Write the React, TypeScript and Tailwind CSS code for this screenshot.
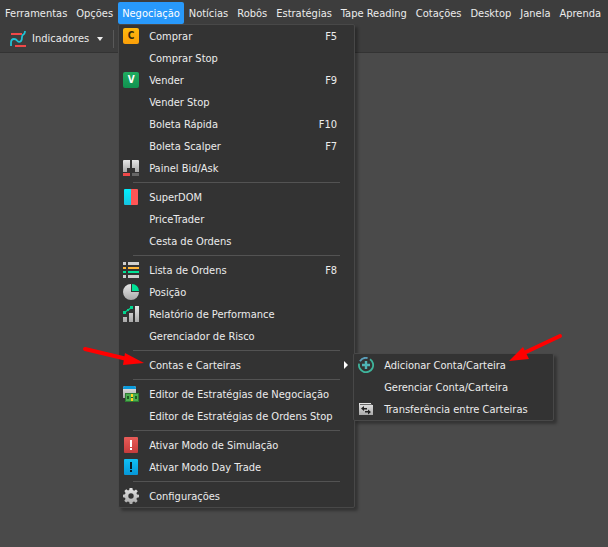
import type { ReactNode } from 'react';

type Item = {
  label: string;
  icon?: ReactNode;
  shortcut?: string;
  children?: Item[];
};

const Svg = ({ children }: { children: ReactNode }) => (
  <svg viewBox="0 0 16 16" className="size-4" aria-hidden="true">
    <defs>
      <linearGradient id="silver" x1="0" y1="0" x2="0" y2="1">
        <stop offset="0" stopColor="#e6e6e6" />
        <stop offset="1" stopColor="#a9a9a9" />
      </linearGradient>
      <linearGradient id="cyan" x1="0" y1="0" x2="0" y2="1">
        <stop offset="0" stopColor="#00f0ff" />
        <stop offset="1" stopColor="#17c3e0" />
      </linearGradient>
    </defs>
    {children}
  </svg>
);

const LetterIcon = ({ letter, className }: { letter: string; className: string }) => (
  <span className={`flex size-4 items-center justify-center rounded-xs bg-linear-to-b text-[10px] leading-4 font-bold ${className}`}>
    {letter}
  </span>
);

const BidAskIcon = () => (
  <Svg>
    <path d="M0 1Q0 0 1 0H7V8H4V12H0ZM9 0H15Q16 0 16 1V12H12V8H9Z" fill="url(#silver)" />
    <path d="M0 13H7V16H0Z" fill="#f04848" />
    <path d="M9 13H16V16H9Z" fill="#666" />
  </Svg>
);

const DomIcon = () => (
  <Svg>
    <path d="M2 0H8V16H2Q1 16 1 15V1Q1 0 2 0Z" fill="url(#cyan)" />
    <path d="M8 0H14Q15 0 15 1V15Q15 16 14 16H8Z" fill="#ff5555" />
  </Svg>
);

const ListIcon = () => (
  <Svg>
    <path d="M0 0H3V3H0ZM5 0H16V3H5ZM0 13H3V16H0ZM5 13H16V16H5Z" fill="#cfcfcf" />
    <path d="M0 5H3V7H0ZM5 5H16V7H5Z" fill="#ffb637" />
    <path d="M0 9H3V11H0ZM5 9H16V11H5Z" fill="#00e296" />
  </Svg>
);

const PieIcon = () => (
  <Svg>
    <path d="M8 0A8 8 0 1 0 16 8H8Z" fill="url(#silver)" />
    <path d="M8 0H9A7 7 0 0 1 16 7V8H8Z" fill="#333" />
    <path d="M9 0A7 7 0 0 1 16 7H9Z" fill="#00e296" />
  </Svg>
);

const ReportIcon = () => (
  <Svg>
    <path d="M0 11H4V16H0ZM6 7H10V16H6ZM12 0H16V16H12Z" fill="url(#silver)" />
    <path d="M1.5 6.5L5 4L8.5 1.5" stroke="#00d68f" strokeWidth="1.3" fill="none" />
    <path d="M0 5H3V8H0ZM4 3H6V5H4ZM7 0H10V3H7Z" fill="#00d68f" />
  </Svg>
);

const StrategyIcon = () => (
  <Svg>
    <path d="M0 2Q0 0 2 0H11Q13 0 13 2V12H0Z" fill="url(#silver)" />
    <path d="M0 2Q0 0 2 0H11Q13 0 13 2V3H0Z" fill="#0b9bdc" />
    <path d="M2 7H16V16H2Z" fill="#2e7d32" />
    <path d="M3 8H15V15H3Z" fill="#4caf50" />
    <path d="M8 8H10V15H8Z" fill="#ffd21f" />
    <path d="M4 10H6V13H4ZM12 10H14V13H12ZM8 11H10V12H8Z" fill="#1f5b24" />
  </Svg>
);

const AlertIcon = ({ className, mark }: { className: string; mark: string }) => (
  <span className={`flex h-4 w-3.5 items-center justify-center rounded-[1px] bg-linear-to-b ${className}`}>
    <svg viewBox="0 0 14 16" className="h-4 w-3.5" aria-hidden="true">
      <path d="M6 3H8V10H6ZM6 11H8V13H6Z" fill={mark} />
    </svg>
  </span>
);

const GearIcon = () => (
  <Svg>
    <path
      fill="url(#silver)"
      fillRule="evenodd"
      d="M6.6 0H9.4L9.8 2.1L11.2 2.7L13 1.5L14.8 3.3L13.4 5L14 6.4L16 6.7V9.3L14 9.7L13.4 11.1L14.6 12.9L12.8 14.7L11.1 13.5L9.7 14L9.3 16H6.7L6.2 14L4.8 13.4L3.1 14.6L1.3 12.8L2.5 11L2 9.7L0 9.3V6.7L2 6.3L2.6 4.9L1.4 3.1L3.2 1.3L5 2.6L6.2 2ZM8 5.3A2.7 2.7 0 1 0 8 10.7A2.7 2.7 0 1 0 8 5.3Z"
    />
  </Svg>
);

const AddAccountIcon = () => (
  <Svg>
    <g fill="none" stroke="#3fb59c" strokeWidth="1.8">
      <path d="M1.9 4.2A7.1 7.1 0 0 1 9.6 1.1" stroke="#5a9fbb" />
      <path d="M12 2.2A7.1 7.1 0 1 1 1.1 6.6" />
    </g>
    <path d="M8 4V12M4 8H12" stroke="#4fb3b5" strokeWidth="2.4" />
  </Svg>
);

const TransferIcon = () => (
  <Svg>
    <path d="M1 2H13V4H15V14H1Z" fill="url(#silver)" />
    <path d="M2 3H14V4H2Z" fill="#666" />
    <path d="M3 7.5L6 5V7H9V8.5H6V10ZM13 11L10 8.5V10H7V11.5H10V13.5Z" fill="#222" />
  </Svg>
);

const menuBar = ['Ferramentas', 'Opções', 'Negociação', 'Notícias', 'Robôs', 'Estratégias', 'Tape Reading', 'Cotações', 'Desktop', 'Janela', 'Aprenda'];

const groups: Item[][] = [
  [
    { label: 'Comprar', shortcut: 'F5', icon: <LetterIcon letter="C" className="from-[#ffb90f] to-[#fb9f08] text-[#33270b]" /> },
    { label: 'Comprar Stop' },
    { label: 'Vender', shortcut: 'F9', icon: <LetterIcon letter="V" className="from-[#20ac60] to-[#109250] text-white" /> },
    { label: 'Vender Stop' },
    { label: 'Boleta Rápida', shortcut: 'F10' },
    { label: 'Boleta Scalper', shortcut: 'F7' },
    { label: 'Painel Bid/Ask', icon: <BidAskIcon /> },
  ],
  [
    { label: 'SuperDOM', icon: <DomIcon /> },
    { label: 'PriceTrader' },
    { label: 'Cesta de Ordens' },
  ],
  [
    { label: 'Lista de Ordens', shortcut: 'F8', icon: <ListIcon /> },
    { label: 'Posição', icon: <PieIcon /> },
    { label: 'Relatório de Performance', icon: <ReportIcon /> },
    { label: 'Gerenciador de Risco' },
  ],
  [
    {
      label: 'Contas e Carteiras',
      children: [
        { label: 'Adicionar Conta/Carteira', icon: <AddAccountIcon /> },
        { label: 'Gerenciar Conta/Carteira' },
        { label: 'Transferência entre Carteiras', icon: <TransferIcon /> },
      ],
    },
  ],
  [
    { label: 'Editor de Estratégias de Negociação', icon: <StrategyIcon /> },
    { label: 'Editor de Estratégias de Ordens Stop' },
  ],
  [
    { label: 'Ativar Modo de Simulação', icon: <AlertIcon className="from-[#e85c58] to-[#c63b3b]" mark="#fff" /> },
    { label: 'Ativar Modo Day Trade', icon: <AlertIcon className="from-[#10c0f5] to-[#0797d8]" mark="#0b1a22" /> },
  ],
  [{ label: 'Configurações', icon: <GearIcon /> }],
];

function MenuRow({ item }: { item: Item }) {
  return (
    <li className="relative">
      <button className="flex h-[22px] w-full items-center pl-1 text-left whitespace-nowrap">
        <span className="mr-2.5 flex w-4 shrink-0 justify-center">{item.icon}</span>
        <span className="flex-1 pt-0.5">{item.label}</span>
        {item.shortcut && <span className="pt-0.5 pr-[17px]">{item.shortcut}</span>}
        {item.children && (
          <svg viewBox="0 0 4 8" className="mr-1.5 h-2 w-1" aria-hidden="true">
            <path d="M0 0L4 4L0 8Z" fill="#fff" />
          </svg>
        )}
      </button>
      {item.children && (
        <ul className="absolute -top-px left-full z-10 -ml-px w-[201px] rounded-xs border border-[#484848] bg-[#333] shadow-[3px_3px_3px_rgba(0,0,0,0.3)]">
          {item.children.map((child) => (
            <MenuRow key={child.label} item={child} />
          ))}
        </ul>
      )}
    </li>
  );
}

function Dropdown() {
  return (
    <div className="absolute top-full left-0 z-10 w-[237px] rounded-xs border border-[#484848] bg-[#333] shadow-[3px_3px_3px_rgba(0,0,0,0.3)]">
      {groups.map((group, i) => (
        <ul key={i}>
          {i > 0 && <li className="mx-3.5 my-[3px] h-px bg-[#535353]" />}
          {group.map((item) => (
            <MenuRow key={item.label} item={item} />
          ))}
        </ul>
      ))}
    </div>
  );
}

export default function App() {
  return (
    <div className="relative min-h-screen overflow-hidden bg-[#4a4a4a] font-['DejaVu_Sans_Condensed','DejaVu_Sans',sans-serif] text-[11px] leading-4 text-[#ececec]">
      <header className="border-b border-[#333] bg-[#3d3d3d]">
        <nav className="flex gap-px pt-0.5 pl-px whitespace-nowrap">
          {menuBar.map((name) => (
            <div key={name} className="relative">
              <button className={`flex h-[22px] items-center rounded-xs px-1 pt-0.5 ${name === 'Negociação' ? 'bg-[#2899fb] text-white' : ''}`}>
                {name}
              </button>
              {name === 'Negociação' && <Dropdown />}
            </div>
          ))}
        </nav>
        <div className="flex h-7 items-center pt-0.5 pl-2.5">
          <button className="flex items-center">
            <svg viewBox="0 0 16 16" className="mr-1.5 size-4" aria-hidden="true">
              <path d="M1 3H12M5 15H16" stroke="#f04848" strokeWidth="2" />
              <path d="M1 15V12Q1 8 4 8Q6 8 7 9.5Q9 12 11 10Q12 9 12 6Q12 4 14 3Q15 2 15 0" fill="none" stroke="#1fc3d6" strokeWidth="1.8" />
            </svg>
            Indicadores
            <svg viewBox="0 0 6 4" className="ml-2 h-1 w-1.5" aria-hidden="true">
              <path d="M0 0H6L3 4Z" fill="#ececec" />
            </svg>
          </button>
          <span className="ml-2.5 h-[18px] w-px bg-[#595959]" />
        </div>
      </header>

      {/* Callout arrows */}
      <svg viewBox="0 0 62 20" className="absolute top-[346px] left-[83px] z-20 h-5 w-[62px]" aria-hidden="true">
        <path d="M2 3L44 13" stroke="#f00" strokeWidth="4" strokeLinecap="round" />
        <path d="M42 7L61 17L40 19Z" fill="#f00" />
      </svg>
      <svg viewBox="0 0 54 30" className="absolute top-[333px] left-[509px] z-20 h-[30px] w-[54px]" aria-hidden="true">
        <path d="M51 3L17 19" stroke="#f00" strokeWidth="4" strokeLinecap="round" />
        <path d="M14 14L0 28L20 26Z" fill="#f00" />
      </svg>
    </div>
  );
}
